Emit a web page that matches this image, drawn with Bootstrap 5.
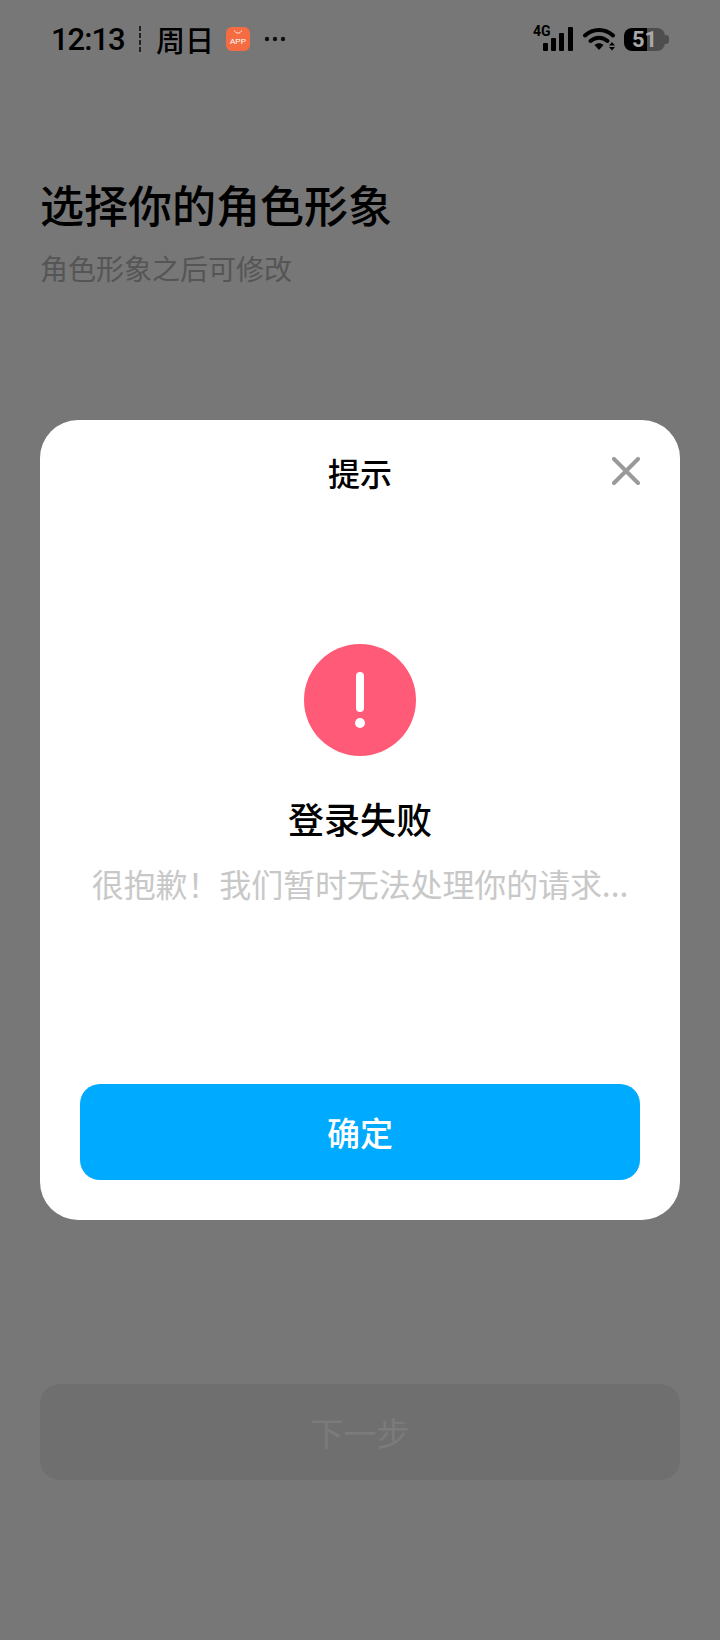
<!DOCTYPE html>
<html lang="zh-CN">
<head>
  <meta charset="UTF-8" />
  <meta name="viewport" content="width=device-width, initial-scale=1" />
  <title>选择你的角色形象</title>
  <link href="https://cdn.jsdelivr.net/npm/bootstrap@5.3.3/dist/css/bootstrap.min.css" rel="stylesheet" />
  <style>
    html, body {
      height: 100%;
      margin: 0;
    }
    body {
      position: relative;
      width: 720px;
      height: 1640px;
      overflow: hidden;
      background: #777;
      color: #000;
      font-family: "Noto Sans CJK SC", "Liberation Sans", sans-serif;
    }
    .status-bar {
      height: 78px;
      padding: 0 51px 0 51px;
      color: #000;
    }
    .clock {
      font-family: Roboto, sans-serif;
      font-size: 31px;
      font-weight: 500;
      letter-spacing: -1px;
      line-height: 1;
      width: 72px;
    }
    .clock-rule {
      width: 2px;
      height: 27px;
      margin: 0 15px 0 16px;
      background: repeating-linear-gradient(to bottom, #222 0 5px, transparent 5px 7px);
    }
    .weekday {
      font-size: 29px;
      font-weight: 500;
      line-height: 1;
      width: 70px;
    }
    .app-badge {
      width: 24px;
      height: 24px;
      border-radius: 6px;
      background: #f56c43;
    }
    .app-badge svg {
      display: block;
    }
    .more-dots {
      margin-left: 14px;
    }
    .signal-tag {
      font-family: Roboto, sans-serif;
      font-size: 14px;
      font-weight: 700;
    }
    .wifi-icon {
      margin-left: 10px;
    }
    .battery-cell {
      width: 41px;
      height: 23px;
      border-radius: 8px;
      background: linear-gradient(to right, #000 0 23px, #4e4e4e 23px);
      color: #a9a9a9;
      font-family: Roboto, sans-serif;
      font-size: 22px;
      font-weight: 700;
      line-height: 23px;
      text-align: center;
    }
    .battery-nub {
      width: 4px;
      height: 9px;
      border-radius: 0 3px 3px 0;
      background: #4e4e4e;
    }
    .intro {
      padding: 96px 40px 0;
    }
    .intro-title {
      font-size: 44px;
      font-weight: 500;
      line-height: 60px;
      margin: 0;
      color: #000;
    }
    .intro-sub {
      font-size: 28px;
      line-height: 40px;
      margin: 14px 0 0;
      color: #555;
    }
    .next-btn {
      width: 640px;
      height: 96px;
      margin: 1096px 0 0 40px;
      border: 0;
      border-radius: 20px;
      background: #6f6f6f;
      color: #7b7b7b;
      font-size: 33px;
      line-height: 1;
    }
    .scrim {
      padding: 420px 40px 0;
    }
    .dialog-box {
      height: 800px;
      border-radius: 38px;
      background: #fff;
    }
    .dialog-head {
      height: 110px;
    }
    .dialog-title {
      font-size: 32px;
      font-weight: 500;
      line-height: 1;
      margin-top: 36px;
    }
    .dialog-close {
      top: 37px;
      right: 40px;
      line-height: 0;
    }
    .alert-mark {
      margin-top: 114px;
      line-height: 0;
    }
    .fail-title {
      font-size: 36px;
      font-weight: 500;
      line-height: 50px;
      margin: 37px 0 0;
      color: #000;
    }
    .fail-text {
      font-size: 32px;
      letter-spacing: -.12px;
      line-height: 46px;
      margin: 17px 0 0;
      color: #c8c8c8;
    }
    .ok-btn {
      width: 560px;
      height: 96px;
      margin: 0 40px 40px;
      border: 0;
      border-radius: 20px;
      background: #0af;
      color: #fff;
      font-size: 33px;
      font-weight: 500;
      line-height: 1;
    }
    .ok-btn:hover {
      background: #0af;
      color: #fff;
    }
  </style>
</head>
<body>

<!-- Status bar -->
<div class="status-bar d-flex align-items-center justify-content-between">
  <div class="d-flex align-items-center">
    <span class="clock">12:13</span>
    <span class="clock-rule"></span>
    <span class="weekday">周日</span>
    <span class="app-badge">
      <svg width="24" height="24" viewBox="0 0 24 24" aria-hidden="true">
        <path d="M8.500 3.500C9.500 7 14.500 7 15.500 3.500" fill="none" stroke="#fff" stroke-width="1" opacity=".8" />
        <text x="12" y="17" text-anchor="middle" font-family="Liberation Sans, sans-serif" font-size="8" fill="#fff">APP</text>
      </svg>
    </span>
    <svg class="more-dots" width="22" height="6" viewBox="0 0 22 6" aria-hidden="true">
      <circle cx="3" cy="3" r="2.2" fill="#111" />
      <circle cx="11" cy="3" r="2.2" fill="#111" />
      <circle cx="19" cy="3" r="2.2" fill="#111" />
    </svg>
  </div>
  <div class="d-flex align-items-center">
    <svg width="40" height="30" viewBox="0 0 40 30" aria-hidden="true">
      <text class="signal-tag" x="0" y="12" fill="#000">4G</text>
      <rect x="10" y="19" width="5" height="8" rx="1" fill="#000" />
      <rect x="18" y="14" width="5" height="13" rx="1" fill="#000" />
      <rect x="26" y="9" width="5" height="18" rx="1" fill="#000" />
      <rect x="35" y="3" width="5" height="24" rx="1" fill="#000" />
    </svg>
    <svg class="wifi-icon" width="33" height="24" viewBox="0 0 33 24" aria-hidden="true">
      <path d="M2 8.500C10 1 22 1 30 8.500" fill="none" stroke="#000" stroke-width="4" stroke-linecap="round" />
      <path d="M7.500 14C12.500 9.500 19.500 9.500 24.500 14" fill="none" stroke="#000" stroke-width="4" stroke-linecap="round" />
      <path d="M11.500 18C14 15.500 18 15.500 20.500 18L16 23Z" fill="#000" />
      <path d="M26 18.500L29 15L32 18.500ZM26 20L29 23.500L32 20Z" fill="#000" />
    </svg>
    <div class="d-flex align-items-center ms-2">
      <span class="battery-cell">51</span>
      <span class="battery-nub"></span>
    </div>
  </div>
</div>

<!-- Page behind the dialog -->
<div class="intro">
  <h1 class="intro-title">选择你的角色形象</h1>
  <p class="intro-sub">角色形象之后可修改</p>
</div>
<button type="button" class="next-btn d-block" disabled>下一步</button>

<!-- Dialog -->
<div class="scrim position-absolute top-0 start-0 w-100">
  <div class="dialog-box position-relative d-flex flex-column">
    <div class="dialog-head text-center">
      <div class="dialog-title">提示</div>
    </div>
    <div class="dialog-close position-absolute">
      <svg width="28" height="28" viewBox="0 0 28 28" aria-hidden="true">
        <path d="M2 2L26 26M26 2L2 26" fill="none" stroke="#9a9a9a" stroke-width="4" stroke-linecap="round" />
      </svg>
    </div>
    <div class="flex-grow-1 text-center">
      <div class="alert-mark">
        <svg width="112" height="112" viewBox="0 0 112 112" aria-hidden="true">
          <circle cx="56" cy="56" r="56" fill="#ff5a78" />
          <rect x="52" y="28" width="8" height="40" rx="4" fill="#fff" />
          <circle cx="56" cy="79" r="5" fill="#fff" />
        </svg>
      </div>
      <h2 class="fail-title">登录失败</h2>
      <p class="fail-text">很抱歉！我们暂时无法处理你的请求...</p>
    </div>
    <button type="button" class="ok-btn btn">确定</button>
  </div>
</div>

<script src="https://cdn.jsdelivr.net/npm/bootstrap@5.3.3/dist/js/bootstrap.bundle.min.js"></script>
</body>
</html>
